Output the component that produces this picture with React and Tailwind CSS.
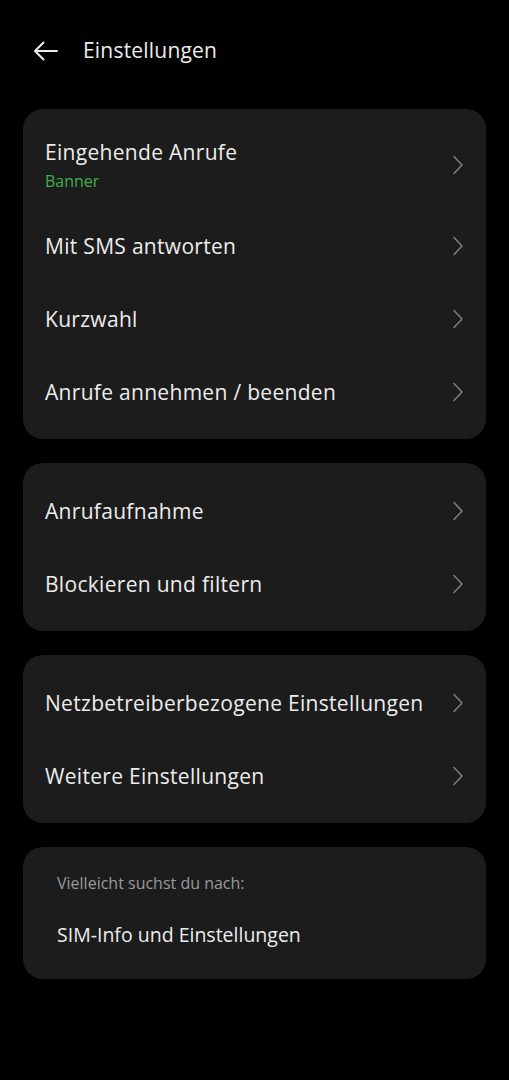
import React from 'react';

const font = { fontFamily: '"Open Sans", Lato, sans-serif' };

function Chevron() {
  return (
    <svg width="12" height="20" viewBox="0 0 12 20" fill="none" className="shrink-0">
      <path d="M2 1.5 L10 10 L2 18.5" stroke="#7d7d7d" strokeWidth="1.6" strokeLinecap="round" strokeLinejoin="round" />
    </svg>
  );
}

function Row({ title, sub }) {
  return (
    <div className={`flex items-center justify-between pl-[22px] pr-[22px] ${sub ? 'h-[89px]' : 'h-[73px]'}`}>
      <div className="flex flex-col">
        <span className="text-[21px] leading-[26px] tracking-[0.3px] text-[#ececec]">{title}</span>
        {sub && <span className="text-[16px] leading-[20px] text-[#3fae4b] mt-[6px]">{sub}</span>}
      </div>
      <Chevron />
    </div>
  );
}

function Card({ children }) {
  return <div className="bg-[#1c1c1c] rounded-[20px] py-[11px]">{children}</div>;
}

export default function App() {
  return (
    <div className="min-h-[1080px] bg-black" style={font}>
      <div className="flex items-center h-[100px] pl-[33px] pt-[2px]">
        <svg width="25" height="20" viewBox="0 0 25 20" fill="none">
          <path d="M24 10 H2 M10.5 1.5 L2 10 L10.5 18.5" stroke="#ededed" strokeWidth="2" strokeLinecap="round" strokeLinejoin="round" />
        </svg>
        <span className="ml-[25px] text-[21px] tracking-[0.2px] text-[#ececec]">Einstellungen</span>
      </div>
      <div className="flex flex-col gap-[24px] px-[23px] pt-[9px]">
        <Card>
          <Row title="Eingehende Anrufe" sub="Banner" />
          <Row title="Mit SMS antworten" />
          <Row title="Kurzwahl" />
          <Row title="Anrufe annehmen / beenden" />
        </Card>
        <Card>
          <Row title="Anrufaufnahme" />
          <Row title="Blockieren und filtern" />
        </Card>
        <Card>
          <Row title="Netzbetreiberbezogene Einstellungen" />
          <Row title="Weitere Einstellungen" />
        </Card>
        <div className="bg-[#1c1c1c] rounded-[20px] h-[132px] flex flex-col pl-[34px] pt-[26px]">
          <span className="text-[16px] leading-[20px] text-[#9a9a9a]">Vielleicht suchst du nach:</span>
          <span className="text-[19.5px] leading-[26px] text-[#ececec] mt-[29px]">SIM-Info und Einstellungen</span>
        </div>
      </div>
    </div>
  );
}
